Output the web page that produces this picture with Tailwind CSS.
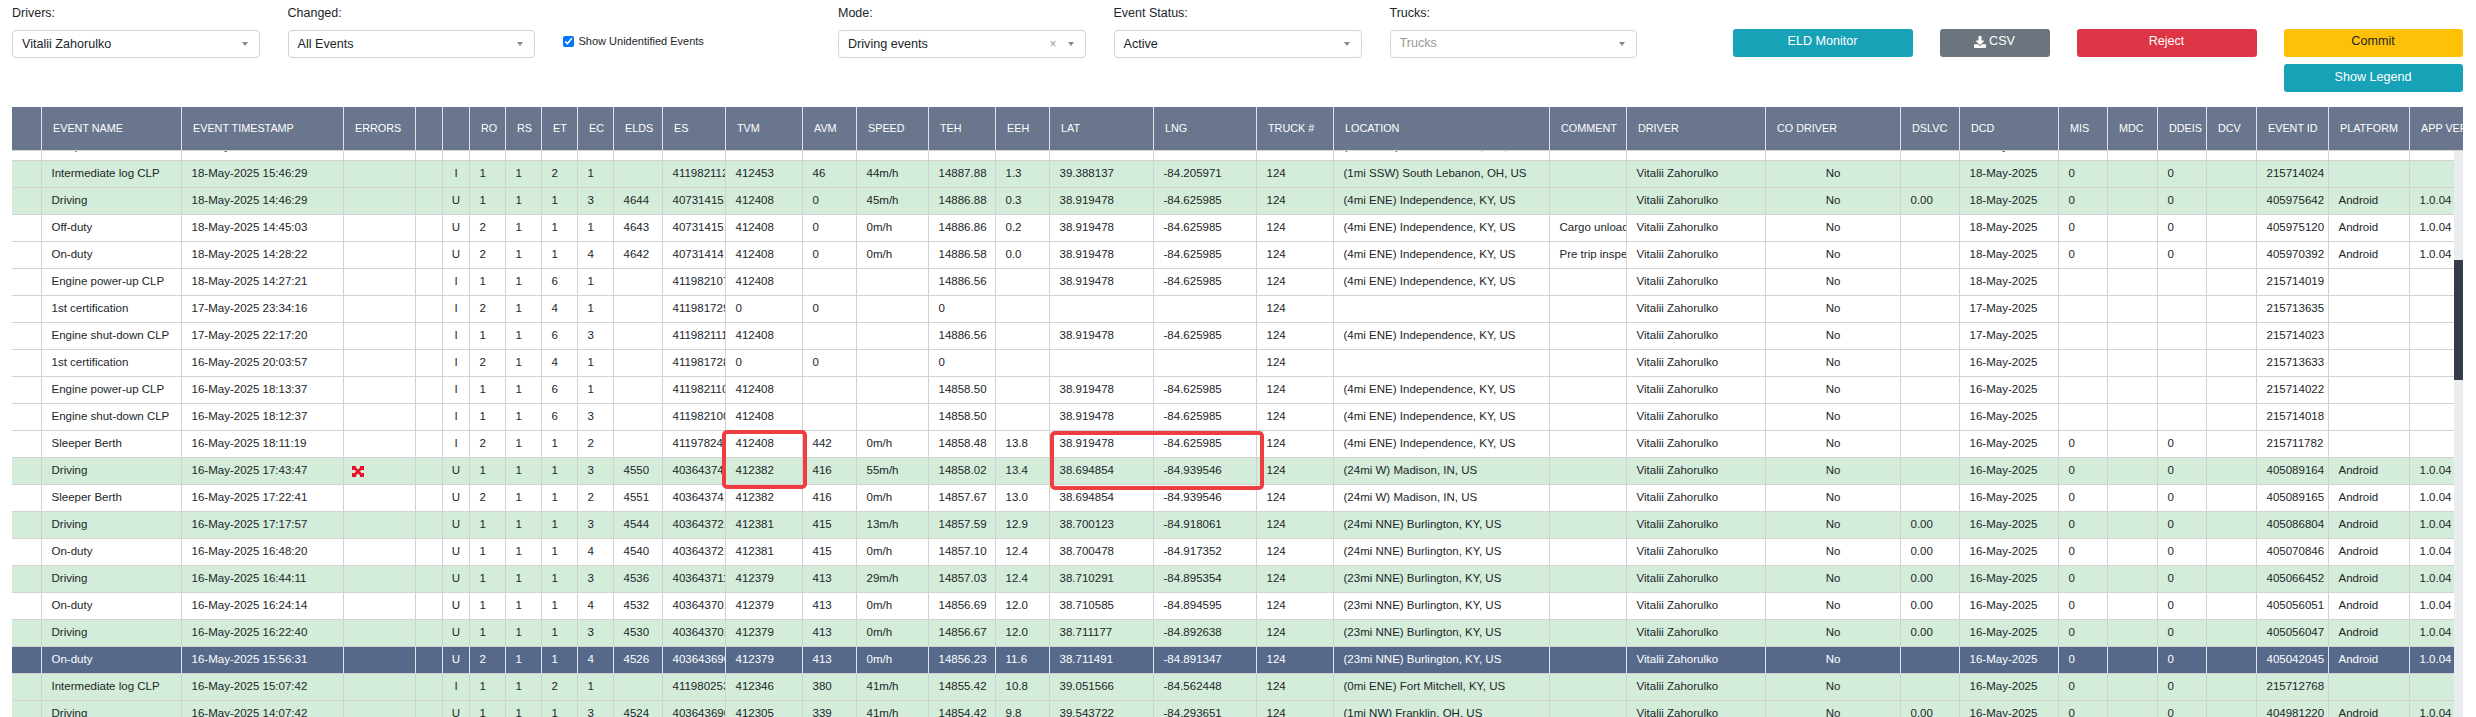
<!DOCTYPE html>
<html lang="en">
<head>
<meta charset="utf-8">
<title>ELD Events</title>
<script src="https://cdn.jsdelivr.net/npm/@tailwindcss/browser@4"></script>
</head>
<body class="bg-white overflow-hidden font-['Liberation_Sans',Arial,sans-serif] text-[#212529]">
<div class="relative h-[717px] w-[2476px] overflow-hidden pl-3">

  <!-- Filters -->
  <div class="flex h-[107px] pt-[6px]">
    <div class="w-[275.5px]">
      <div class="text-[12.5px] leading-[15px] h-[24px]">Drivers:</div>
      <div class="relative flex items-center w-[247.5px] h-[28px] border border-[#ced4da] rounded-[4px] pl-[9px] text-[12.6px]">Vitalii Zahorulko
        <span class="absolute right-[11px] top-[11px] w-0 h-0 border-x-[3.5px] border-x-transparent border-t-[4.5px] border-t-[#888]"></span></div>
    </div>
    <div class="w-[275px]">
      <div class="text-[12.5px] leading-[15px] h-[24px]">Changed:</div>
      <div class="relative flex items-center w-[247.5px] h-[28px] border border-[#ced4da] rounded-[4px] pl-[9px] text-[12.6px]">All Events
        <span class="absolute right-[11px] top-[11px] w-0 h-0 border-x-[3.5px] border-x-transparent border-t-[4.5px] border-t-[#888]"></span></div>
    </div>
    <div class="w-[275.5px] pt-[29px]">
      <label class="flex items-center gap-[5px] text-[11px] leading-[13px]"><input type="checkbox" checked class="w-[11px] h-[11px] m-0 accent-[#0075ff]">Show Unidentified Events</label>
    </div>
    <div class="w-[275.5px]">
      <div class="text-[12.5px] leading-[15px] h-[24px]">Mode:</div>
      <div class="relative flex items-center w-[247.5px] h-[28px] border border-[#ced4da] rounded-[4px] pl-[9px] text-[12.6px]">Driving events
        <span class="absolute right-[28px] top-[5px] text-[#999] text-[12px] leading-[16px]">×</span>
        <span class="absolute right-[11px] top-[11px] w-0 h-0 border-x-[3.5px] border-x-transparent border-t-[4.5px] border-t-[#888]"></span></div>
    </div>
    <div class="w-[276px]">
      <div class="text-[12.5px] leading-[15px] h-[24px]">Event Status:</div>
      <div class="relative flex items-center w-[248px] h-[28px] border border-[#ced4da] rounded-[4px] pl-[9px] text-[12.6px]">Active
        <span class="absolute right-[11px] top-[11px] w-0 h-0 border-x-[3.5px] border-x-transparent border-t-[4.5px] border-t-[#888]"></span></div>
    </div>
    <div class="w-[343px]">
      <div class="text-[12.5px] leading-[15px] h-[24px]">Trucks:</div>
      <div class="relative flex items-center w-[247.5px] h-[28px] border border-[#ced4da] rounded-[4px] pl-[9px] pb-[2px] text-[12.6px] text-[#999]">Trucks
        <span class="absolute right-[11px] top-[11px] w-0 h-0 border-x-[3.5px] border-x-transparent border-t-[4.5px] border-t-[#888]"></span></div>
    </div>
    <div class="flex items-start gap-[27px] text-[12.6px] pt-[23px]">
      <div class="flex items-center justify-center w-[180px] h-[28px] pb-[3px] rounded-[3px] bg-[#17a2b8] text-white">ELD Monitor</div>
      <div class="flex items-center justify-center gap-[3px] w-[110px] h-[28px] pb-[3px] rounded-[3px] bg-[#6c757d] text-white">
        <svg class="w-[12px] h-[12px] fill-white" viewBox="0 0 512 512"><path d="M216 0h80c13.3 0 24 10.7 24 24v168h87.7c17.8 0 26.7 21.5 14.1 34.1L269.7 378.3c-7.5 7.5-19.8 7.5-27.3 0L90.1 226.1c-12.6-12.6-3.7-34.1 14.1-34.1H192V24c0-13.3 10.7-24 24-24zm296 376v112c0 13.3-10.7 24-24 24H24c-13.3 0-24-10.7-24-24V376c0-13.3 10.7-24 24-24h146.7l49 49c20.1 20.1 52.5 20.1 72.6 0l49-49H488c13.3 0 24 10.7 24 24zm-124 88c0-11-9-20-20-20s-20 9-20 20 9 20 20 20 20-9 20-20zm64 0c0-11-9-20-20-20s-20 9-20 20 9 20 20 20 20-9 20-20z"/></svg>CSV</div>
      <div class="flex items-center justify-center w-[180px] h-[28px] pb-[3px] rounded-[3px] bg-[#dc3545] text-white">Reject</div>
      <div class="flex flex-col gap-[7px] w-[179px]">
        <div class="flex items-center justify-center h-[28px] pb-[3px] rounded-[3px] bg-[#ffc107] text-[#212529]">Commit</div>
        <div class="flex items-center justify-center h-[28px] pb-[1px] rounded-[3px] bg-[#17a2b8] text-white">Show Legend</div>
      </div>
    </div>
  </div>

  <!-- Table -->
  <div class="w-[2451px]">
    <div class="overflow-hidden">
      <table class="table-fixed border-separate border-spacing-0 w-[2488px] max-w-none bg-[#69768e] text-white text-[10.8px] [&_th]:h-[44px] [&_th]:font-normal [&_th]:text-left [&_th]:pl-[11px] [&_th]:whitespace-nowrap [&_th]:overflow-hidden [&_th]:border-r [&_th]:border-r-[#dfe2e8] [&_th]:border-b [&_th]:border-b-[#d5d5d5]">
        <colgroup><col class="w-[30px]"><col class="w-[140px]"><col class="w-[162px]"><col class="w-[72px]"><col class="w-[27px]"><col class="w-[27px]"><col class="w-[36px]"><col class="w-[36px]"><col class="w-[36px]"><col class="w-[36px]"><col class="w-[49px]"><col class="w-[63px]"><col class="w-[77px]"><col class="w-[54px]"><col class="w-[72px]"><col class="w-[67px]"><col class="w-[54px]"><col class="w-[104px]"><col class="w-[103px]"><col class="w-[77px]"><col class="w-[216px]"><col class="w-[77px]"><col class="w-[139px]"><col class="w-[135px]"><col class="w-[59px]"><col class="w-[99px]"><col class="w-[49px]"><col class="w-[50px]"><col class="w-[49px]"><col class="w-[50px]"><col class="w-[72px]"><col class="w-[81px]"><col class="w-[90px]"></colgroup>
        <thead><tr><th></th><th>EVENT NAME</th><th>EVENT TIMESTAMP</th><th>ERRORS</th><th></th><th></th><th>RO</th><th>RS</th><th>ET</th><th>EC</th><th>ELDS</th><th>ES</th><th>TVM</th><th>AVM</th><th>SPEED</th><th>TEH</th><th>EEH</th><th>LAT</th><th>LNG</th><th>TRUCK #</th><th>LOCATION</th><th>COMMENT</th><th>DRIVER</th><th>CO DRIVER</th><th>DSLVC</th><th>DCD</th><th>MIS</th><th>MDC</th><th>DDEIS</th><th>DCV</th><th>EVENT ID</th><th>PLATFORM</th><th>APP VER</th></tr></thead>
      </table>
    </div>
    <div class="flex h-[566px]">
      <div class="w-[2442px] overflow-hidden">
        <table class="-mt-[17px] table-fixed border-separate border-spacing-0 w-[2488px] max-w-none text-[11.52px] [&_td]:h-[27px] [&_td]:pl-[9.5px] [&_td]:pr-0 [&_td]:whitespace-nowrap [&_td]:overflow-hidden [&_td]:border-r [&_td]:border-b [&_td]:border-[#d2d2d2] [&_td:nth-child(6)]:text-center [&_td:nth-child(6)]:pl-0 [&_td:nth-child(24)]:text-center [&_td:nth-child(24)]:pl-0">
          <colgroup><col class="w-[30px]"><col class="w-[140px]"><col class="w-[162px]"><col class="w-[72px]"><col class="w-[27px]"><col class="w-[27px]"><col class="w-[36px]"><col class="w-[36px]"><col class="w-[36px]"><col class="w-[36px]"><col class="w-[49px]"><col class="w-[63px]"><col class="w-[77px]"><col class="w-[54px]"><col class="w-[72px]"><col class="w-[67px]"><col class="w-[54px]"><col class="w-[104px]"><col class="w-[103px]"><col class="w-[77px]"><col class="w-[216px]"><col class="w-[77px]"><col class="w-[139px]"><col class="w-[135px]"><col class="w-[59px]"><col class="w-[99px]"><col class="w-[49px]"><col class="w-[50px]"><col class="w-[49px]"><col class="w-[50px]"><col class="w-[72px]"><col class="w-[81px]"><col class="w-[90px]"></colgroup>
          <tbody>
<tr><td></td><td>Sleeper Berth</td><td>18-May-2025 15:46:30</td><td></td><td></td><td>I</td><td>2</td><td>1</td><td>1</td><td>2</td><td></td><td>411982113</td><td>412453</td><td>46</td><td>0m/h</td><td>14887.88</td><td>1.3</td><td>39.388137</td><td>-84.205971</td><td>124</td><td>(1mi SSW) South Lebanon, OH, US</td><td></td><td>Vitalii Zahorulko</td><td>No</td><td></td><td>18-May-2025</td><td>0</td><td></td><td>0</td><td></td><td>215714025</td><td></td><td></td></tr>
<tr class="bg-[#d4edda]"><td></td><td>Intermediate log CLP</td><td>18-May-2025 15:46:29</td><td></td><td></td><td>I</td><td>1</td><td>1</td><td>2</td><td>1</td><td></td><td>411982112</td><td>412453</td><td>46</td><td>44m/h</td><td>14887.88</td><td>1.3</td><td>39.388137</td><td>-84.205971</td><td>124</td><td>(1mi SSW) South Lebanon, OH, US</td><td></td><td>Vitalii Zahorulko</td><td>No</td><td></td><td>18-May-2025</td><td>0</td><td></td><td>0</td><td></td><td>215714024</td><td></td><td></td></tr>
<tr class="bg-[#d4edda]"><td></td><td>Driving</td><td>18-May-2025 14:46:29</td><td></td><td></td><td>U</td><td>1</td><td>1</td><td>1</td><td>3</td><td>4644</td><td>407314151</td><td>412408</td><td>0</td><td>45m/h</td><td>14886.88</td><td>0.3</td><td>38.919478</td><td>-84.625985</td><td>124</td><td>(4mi ENE) Independence, KY, US</td><td></td><td>Vitalii Zahorulko</td><td>No</td><td>0.00</td><td>18-May-2025</td><td>0</td><td></td><td>0</td><td></td><td>405975642</td><td>Android</td><td>1.0.04</td></tr>
<tr><td></td><td>Off-duty</td><td>18-May-2025 14:45:03</td><td></td><td></td><td>U</td><td>2</td><td>1</td><td>1</td><td>1</td><td>4643</td><td>407314151</td><td>412408</td><td>0</td><td>0m/h</td><td>14886.86</td><td>0.2</td><td>38.919478</td><td>-84.625985</td><td>124</td><td>(4mi ENE) Independence, KY, US</td><td>Cargo unloading</td><td>Vitalii Zahorulko</td><td>No</td><td></td><td>18-May-2025</td><td>0</td><td></td><td>0</td><td></td><td>405975120</td><td>Android</td><td>1.0.04</td></tr>
<tr><td></td><td>On-duty</td><td>18-May-2025 14:28:22</td><td></td><td></td><td>U</td><td>2</td><td>1</td><td>1</td><td>4</td><td>4642</td><td>407314141</td><td>412408</td><td>0</td><td>0m/h</td><td>14886.58</td><td>0.0</td><td>38.919478</td><td>-84.625985</td><td>124</td><td>(4mi ENE) Independence, KY, US</td><td>Pre trip inspection</td><td>Vitalii Zahorulko</td><td>No</td><td></td><td>18-May-2025</td><td>0</td><td></td><td>0</td><td></td><td>405970392</td><td>Android</td><td>1.0.04</td></tr>
<tr><td></td><td>Engine power-up CLP</td><td>18-May-2025 14:27:21</td><td></td><td></td><td>I</td><td>1</td><td>1</td><td>6</td><td>1</td><td></td><td>411982107</td><td>412408</td><td></td><td></td><td>14886.56</td><td></td><td>38.919478</td><td>-84.625985</td><td>124</td><td>(4mi ENE) Independence, KY, US</td><td></td><td>Vitalii Zahorulko</td><td>No</td><td></td><td>18-May-2025</td><td></td><td></td><td></td><td></td><td>215714019</td><td></td><td></td></tr>
<tr><td></td><td>1st certification</td><td>17-May-2025 23:34:16</td><td></td><td></td><td>I</td><td>2</td><td>1</td><td>4</td><td>1</td><td></td><td>411981729</td><td>0</td><td>0</td><td></td><td>0</td><td></td><td></td><td></td><td>124</td><td></td><td></td><td>Vitalii Zahorulko</td><td>No</td><td></td><td>17-May-2025</td><td></td><td></td><td></td><td></td><td>215713635</td><td></td><td></td></tr>
<tr><td></td><td>Engine shut-down CLP</td><td>17-May-2025 22:17:20</td><td></td><td></td><td>I</td><td>1</td><td>1</td><td>6</td><td>3</td><td></td><td>411982111</td><td>412408</td><td></td><td></td><td>14886.56</td><td></td><td>38.919478</td><td>-84.625985</td><td>124</td><td>(4mi ENE) Independence, KY, US</td><td></td><td>Vitalii Zahorulko</td><td>No</td><td></td><td>17-May-2025</td><td></td><td></td><td></td><td></td><td>215714023</td><td></td><td></td></tr>
<tr><td></td><td>1st certification</td><td>16-May-2025 20:03:57</td><td></td><td></td><td>I</td><td>2</td><td>1</td><td>4</td><td>1</td><td></td><td>411981728</td><td>0</td><td>0</td><td></td><td>0</td><td></td><td></td><td></td><td>124</td><td></td><td></td><td>Vitalii Zahorulko</td><td>No</td><td></td><td>16-May-2025</td><td></td><td></td><td></td><td></td><td>215713633</td><td></td><td></td></tr>
<tr><td></td><td>Engine power-up CLP</td><td>16-May-2025 18:13:37</td><td></td><td></td><td>I</td><td>1</td><td>1</td><td>6</td><td>1</td><td></td><td>411982110</td><td>412408</td><td></td><td></td><td>14858.50</td><td></td><td>38.919478</td><td>-84.625985</td><td>124</td><td>(4mi ENE) Independence, KY, US</td><td></td><td>Vitalii Zahorulko</td><td>No</td><td></td><td>16-May-2025</td><td></td><td></td><td></td><td></td><td>215714022</td><td></td><td></td></tr>
<tr><td></td><td>Engine shut-down CLP</td><td>16-May-2025 18:12:37</td><td></td><td></td><td>I</td><td>1</td><td>1</td><td>6</td><td>3</td><td></td><td>411982100</td><td>412408</td><td></td><td></td><td>14858.50</td><td></td><td>38.919478</td><td>-84.625985</td><td>124</td><td>(4mi ENE) Independence, KY, US</td><td></td><td>Vitalii Zahorulko</td><td>No</td><td></td><td>16-May-2025</td><td></td><td></td><td></td><td></td><td>215714018</td><td></td><td></td></tr>
<tr><td></td><td>Sleeper Berth</td><td>16-May-2025 18:11:19</td><td></td><td></td><td>I</td><td>2</td><td>1</td><td>1</td><td>2</td><td></td><td>411978241</td><td>412408</td><td>442</td><td>0m/h</td><td>14858.48</td><td>13.8</td><td>38.919478</td><td>-84.625985</td><td>124</td><td>(4mi ENE) Independence, KY, US</td><td></td><td>Vitalii Zahorulko</td><td>No</td><td></td><td>16-May-2025</td><td>0</td><td></td><td>0</td><td></td><td>215711782</td><td></td><td></td></tr>
<tr class="bg-[#d4edda]"><td></td><td>Driving</td><td>16-May-2025 17:43:47</td><td><svg class="block -ml-[2px] w-[12px] h-[11px]" viewBox="0 0 12 11"><path d="M2 1.5 L10 9.5 M10 1.5 L2 9.5" stroke="#e8112d" stroke-width="2.6" fill="none"/><path d="M0 0h4v2H2v2H0zM8 0h4v4h-2V2H8zM0 7h2v2h2v2H0zM10 7h2v4H8V9h2z" fill="#e8112d"/></svg></td><td></td><td>U</td><td>1</td><td>1</td><td>1</td><td>3</td><td>4550</td><td>403643741</td><td>412382</td><td>416</td><td>55m/h</td><td>14858.02</td><td>13.4</td><td>38.694854</td><td>-84.939546</td><td>124</td><td>(24mi W) Madison, IN, US</td><td></td><td>Vitalii Zahorulko</td><td>No</td><td></td><td>16-May-2025</td><td>0</td><td></td><td>0</td><td></td><td>405089164</td><td>Android</td><td>1.0.04</td></tr>
<tr><td></td><td>Sleeper Berth</td><td>16-May-2025 17:22:41</td><td></td><td></td><td>U</td><td>2</td><td>1</td><td>1</td><td>2</td><td>4551</td><td>403643741</td><td>412382</td><td>416</td><td>0m/h</td><td>14857.67</td><td>13.0</td><td>38.694854</td><td>-84.939546</td><td>124</td><td>(24mi W) Madison, IN, US</td><td></td><td>Vitalii Zahorulko</td><td>No</td><td></td><td>16-May-2025</td><td>0</td><td></td><td>0</td><td></td><td>405089165</td><td>Android</td><td>1.0.04</td></tr>
<tr class="bg-[#d4edda]"><td></td><td>Driving</td><td>16-May-2025 17:17:57</td><td></td><td></td><td>U</td><td>1</td><td>1</td><td>1</td><td>3</td><td>4544</td><td>403643721</td><td>412381</td><td>415</td><td>13m/h</td><td>14857.59</td><td>12.9</td><td>38.700123</td><td>-84.918061</td><td>124</td><td>(24mi NNE) Burlington, KY, US</td><td></td><td>Vitalii Zahorulko</td><td>No</td><td>0.00</td><td>16-May-2025</td><td>0</td><td></td><td>0</td><td></td><td>405086804</td><td>Android</td><td>1.0.04</td></tr>
<tr><td></td><td>On-duty</td><td>16-May-2025 16:48:20</td><td></td><td></td><td>U</td><td>1</td><td>1</td><td>1</td><td>4</td><td>4540</td><td>403643721</td><td>412381</td><td>415</td><td>0m/h</td><td>14857.10</td><td>12.4</td><td>38.700478</td><td>-84.917352</td><td>124</td><td>(24mi NNE) Burlington, KY, US</td><td></td><td>Vitalii Zahorulko</td><td>No</td><td>0.00</td><td>16-May-2025</td><td>0</td><td></td><td>0</td><td></td><td>405070846</td><td>Android</td><td>1.0.04</td></tr>
<tr class="bg-[#d4edda]"><td></td><td>Driving</td><td>16-May-2025 16:44:11</td><td></td><td></td><td>U</td><td>1</td><td>1</td><td>1</td><td>3</td><td>4536</td><td>403643711</td><td>412379</td><td>413</td><td>29m/h</td><td>14857.03</td><td>12.4</td><td>38.710291</td><td>-84.895354</td><td>124</td><td>(23mi NNE) Burlington, KY, US</td><td></td><td>Vitalii Zahorulko</td><td>No</td><td>0.00</td><td>16-May-2025</td><td>0</td><td></td><td>0</td><td></td><td>405066452</td><td>Android</td><td>1.0.04</td></tr>
<tr><td></td><td>On-duty</td><td>16-May-2025 16:24:14</td><td></td><td></td><td>U</td><td>1</td><td>1</td><td>1</td><td>4</td><td>4532</td><td>403643701</td><td>412379</td><td>413</td><td>0m/h</td><td>14856.69</td><td>12.0</td><td>38.710585</td><td>-84.894595</td><td>124</td><td>(23mi NNE) Burlington, KY, US</td><td></td><td>Vitalii Zahorulko</td><td>No</td><td>0.00</td><td>16-May-2025</td><td>0</td><td></td><td>0</td><td></td><td>405056051</td><td>Android</td><td>1.0.04</td></tr>
<tr class="bg-[#d4edda]"><td></td><td>Driving</td><td>16-May-2025 16:22:40</td><td></td><td></td><td>U</td><td>1</td><td>1</td><td>1</td><td>3</td><td>4530</td><td>403643701</td><td>412379</td><td>413</td><td>0m/h</td><td>14856.67</td><td>12.0</td><td>38.711177</td><td>-84.892638</td><td>124</td><td>(23mi NNE) Burlington, KY, US</td><td></td><td>Vitalii Zahorulko</td><td>No</td><td>0.00</td><td>16-May-2025</td><td>0</td><td></td><td>0</td><td></td><td>405056047</td><td>Android</td><td>1.0.04</td></tr>
<tr class="bg-[#56698a] text-white [&_td]:border-r-[#dfe3ea]!"><td></td><td>On-duty</td><td>16-May-2025 15:56:31</td><td></td><td></td><td>U</td><td>2</td><td>1</td><td>1</td><td>4</td><td>4526</td><td>403643690</td><td>412379</td><td>413</td><td>0m/h</td><td>14856.23</td><td>11.6</td><td>38.711491</td><td>-84.891347</td><td>124</td><td>(23mi NNE) Burlington, KY, US</td><td></td><td>Vitalii Zahorulko</td><td>No</td><td></td><td>16-May-2025</td><td>0</td><td></td><td>0</td><td></td><td>405042045</td><td>Android</td><td>1.0.04</td></tr>
<tr class="bg-[#d4edda]"><td></td><td>Intermediate log CLP</td><td>16-May-2025 15:07:42</td><td></td><td></td><td>I</td><td>1</td><td>1</td><td>2</td><td>1</td><td></td><td>411980253</td><td>412346</td><td>380</td><td>41m/h</td><td>14855.42</td><td>10.8</td><td>39.051566</td><td>-84.562448</td><td>124</td><td>(0mi ENE) Fort Mitchell, KY, US</td><td></td><td>Vitalii Zahorulko</td><td>No</td><td></td><td>16-May-2025</td><td>0</td><td></td><td>0</td><td></td><td>215712768</td><td></td><td></td></tr>
<tr class="bg-[#d4edda]"><td></td><td>Driving</td><td>16-May-2025 14:07:42</td><td></td><td></td><td>U</td><td>1</td><td>1</td><td>1</td><td>3</td><td>4524</td><td>403643690</td><td>412305</td><td>339</td><td>41m/h</td><td>14854.42</td><td>9.8</td><td>39.543722</td><td>-84.293651</td><td>124</td><td>(1mi NW) Franklin, OH, US</td><td></td><td>Vitalii Zahorulko</td><td>No</td><td>0.00</td><td>16-May-2025</td><td>0</td><td></td><td>0</td><td></td><td>404981220</td><td>Android</td><td>1.0.04</td></tr>
          </tbody>
        </table>
      </div>
      <div class="w-[9px] h-full bg-[#e9edf0] pt-[109px]">
        <div class="h-[120px] bg-[#343b4a]"></div>
      </div>
    </div>
  </div>

  <!-- Red annotation boxes drawn over the table -->
  <div class="absolute left-[722px] top-[430px] w-[85px] h-[59px] border-4 border-[#ef3e42] rounded-[5px]"></div>
  <div class="absolute left-[1050px] top-[431px] w-[214px] h-[59px] border-4 border-[#ef3e42] rounded-[5px]"></div>
</div>
</body>
</html>
